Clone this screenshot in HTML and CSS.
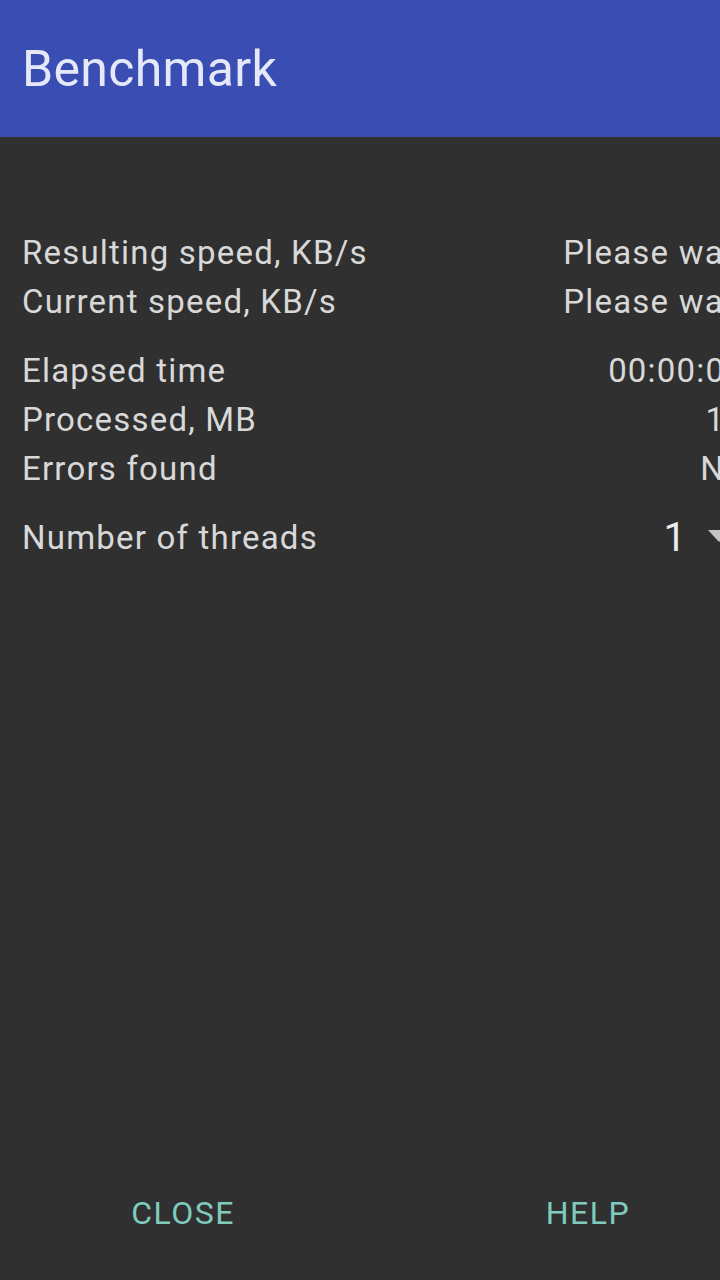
FILE: index.html
```html
<!DOCTYPE html>
<html>
<head>
<meta charset="utf-8">
<link rel="stylesheet" href="styles.css">
</head>
<body>
<div class="screen">
  <header class="appbar"><h1 class="title">Benchmark</h1></header>
  <main class="content">
    <div class="group">
      <div class="row"><span class="label">Resulting speed, KB/s</span><span class="value">Please wait</span></div>
      <div class="row"><span class="label">Current speed, KB/s</span><span class="value">Please wait</span></div>
    </div>
    <div class="group">
      <div class="row"><span class="label">Elapsed time</span><span class="value">00:00:00</span></div>
      <div class="row"><span class="label">Processed, MB</span><span class="value">10</span></div>
      <div class="row"><span class="label">Errors found</span><span class="value">No</span></div>
    </div>
    <div class="group">
      <div class="row"><span class="label">Number of threads</span>
        <span class="spinner"><span class="spin-val">1</span><svg class="spin-arrow" width="22" height="14" viewBox="0 0 22 14"><path d="M0 0 L22 0 L11 12 Z" fill="#c4c4c4"/></svg></span>
      </div>
    </div>
  </main>
  <footer class="buttons">
    <button class="btn">CLOSE</button>
    <button class="btn">HELP</button>
  </footer>
</div>
</body>
</html>
```
FILE: styles.css
```css
html, body {
  margin: 0;
  padding: 0;
  background: #303030;
  overflow: hidden;
}
.screen {
  width: 860px;
  height: 1280px;
  display: flex;
  flex-direction: column;
  font-family: Roboto, "Noto Sans", sans-serif;
  color: #d8d8d8;
}
.appbar {
  height: 137px;
  background: #3a4db2;
  display: flex;
  align-items: center;
  padding-left: 22px;
  box-sizing: border-box;
  flex-shrink: 0;
}
.title {
  margin: 0;
  font-weight: 400;
  font-size: 50px;
  letter-spacing: 0.3px;
  color: #e4e8f8;
}
.content {
  padding: 91px 115px 0 22px;
  display: flex;
  flex-direction: column;
  gap: 20px;
}
.row {
  display: flex;
  justify-content: space-between;
  align-items: center;
  height: 49px;
  font-size: 33px;
  letter-spacing: 1.2px;
}
.value {
  text-align: right;
}
.spinner {
  display: flex;
  align-items: flex-start;
  gap: 22px;
  margin-right: 15px;
}
.spin-val {
  font-size: 40px;
  line-height: 49px;
  letter-spacing: 0;
  color: #ececec;
}
.spin-arrow {
  margin-top: 17px;
}
.buttons {
  margin-top: auto;
  display: flex;
  gap: 215px;
  padding: 0 0 19px 88px;
}
.btn {
  width: 190px;
  height: 96px;
  background: transparent;
  border: none;
  font-family: Roboto, "Noto Sans", sans-serif;
  font-size: 32px;
  letter-spacing: 1.5px;
  color: #7fcbbd;
  padding: 0;
}
```
